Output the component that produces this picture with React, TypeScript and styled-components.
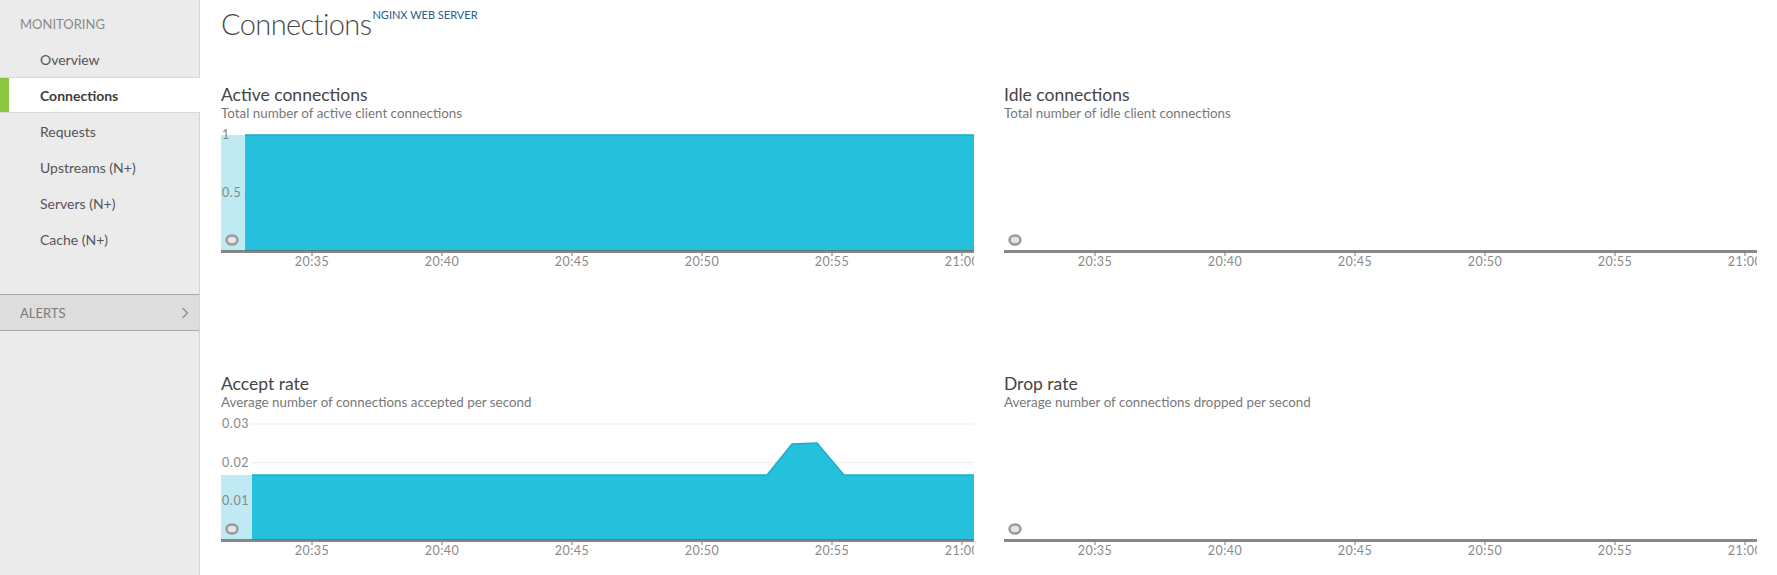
import React from "react";
import styled, { createGlobalStyle } from "styled-components";

const GlobalStyle = createGlobalStyle`
  html, body {
    margin: 0;
    padding: 0;
    background: #fff;
  }
  body {
    font-family: Lato, "Open Sans", "Liberation Sans", sans-serif;
    color: #555;
  }
`;

const Layout = styled.div`
  display: flex;
  min-height: 100vh;
`;

const Sidebar = styled.nav`
  width: 200px;
  flex-shrink: 0;
  background: #ebebeb;
  border-right: 1px solid #d4d4d4;
  box-sizing: border-box;
`;

const SectionLabel = styled.div`
  padding: 14px 0 7px 20px;
  line-height: 20px;
  font-size: 13px;
  color: #8a8a8a;
  text-transform: uppercase;
`;

const NavList = styled.ul`
  list-style: none;
  margin: 0 0 37px;
  padding: 0;
`;

const NavItem = styled.li<{ $active?: boolean }>`
  height: 36px;
  box-sizing: border-box;
  display: flex;
  align-items: center;
  padding-left: 40px;
  font-size: 14px;
  color: ${(p) => (p.$active ? "#3d3d3d" : "#555")};
  font-weight: ${(p) => (p.$active ? 700 : 400)};
  background: ${(p) => (p.$active ? "#fff" : "transparent")};
  border-top: 1px solid ${(p) => (p.$active ? "#d8d8d8" : "transparent")};
  border-bottom: 1px solid ${(p) => (p.$active ? "#d8d8d8" : "transparent")};
  box-shadow: ${(p) => (p.$active ? "inset 9px 0 0 #8cc63f" : "none")};
  margin-right: ${(p) => (p.$active ? "-1px" : "0")};
`;

const AlertsRow = styled.div`
  height: 37px;
  box-sizing: border-box;
  display: flex;
  align-items: center;
  justify-content: space-between;
  padding: 0 10px 0 20px;
  background: #dddddd;
  border-top: 1px solid #a9a9a9;
  border-bottom: 1px solid #a9a9a9;
  font-size: 13px;
  color: #7a7a7a;
`;

const Chevron = styled.svg`
  width: 8px;
  height: 12px;
`;

const Main = styled.main`
  flex: 1;
  padding: 0 20px 0 21px;
  min-width: 0;
`;

const Header = styled.header`
  height: 85px;
`;

const PageTitle = styled.h1`
  margin: 0;
  padding-top: 4px;
  font-size: 29px;
  line-height: 40px;
  font-weight: 300;
  color: #4a4a4a;
  letter-spacing: -0.6px;
`;

const Tag = styled.sup`
  font-size: 11px;
  line-height: 0;
  font-weight: 400;
  color: #2b5a87;
  letter-spacing: 0;
  vertical-align: 16px;
  margin-left: 1px;
`;

const ChartGrid = styled.div`
  display: grid;
  grid-template-columns: 1fr 1fr;
  column-gap: 30px;
  row-gap: 98px;
`;

const ChartCard = styled.section`
  min-width: 0;
`;

const ChartTitle = styled.h2`
  margin: 0;
  font-size: 17.5px;
  line-height: 20px;
  font-weight: 400;
  color: #454545;
`;

const ChartSubtitle = styled.p`
  margin: 0;
  font-size: 13.4px;
  line-height: 16px;
  color: #787878;
`;

const ChartSvg = styled.svg`
  display: block;
  width: 100%;
  height: 155px;
  overflow: hidden;
  font-family: Lato, "Open Sans", sans-serif;
`;

const W = 753;
const TOP = 14;
const AXIS = 130;
const PLOT_H = AXIS - TOP;
const TIMES = ["20:35", "20:40", "20:45", "20:50", "20:55", "21:00"];

type Point = [number, number];

interface ChartProps {
  max: number;
  yTicks?: { value: number; label: string }[];
  band?: number;
  data?: Point[];
}

const Chart = ({ max, yTicks = [], band = 0, data }: ChartProps) => {
  const y = (v: number) => AXIS - (v / max) * PLOT_H;
  const area = (pts: Point[]) =>
    `M${pts[0][0]},${AXIS} ` + pts.map(([x, v]) => `L${x},${y(v)}`).join(" ") + ` L${pts[pts.length - 1][0]},${AXIS} Z`;
  const line = (pts: Point[]) => pts.map(([x, v], i) => `${i ? "L" : "M"}${x},${y(v)}`).join(" ");

  const main = data ? data.filter(([x]) => x >= band) : [];
  const bandPts: Point[] = data ? [[0, data[0][1]], [band, data[0][1]]] : [];

  return (
    <ChartSvg viewBox={`0 0 ${W} 155`} preserveAspectRatio="none">
      {yTicks.map((t) => (
        <line key={t.label} x1={30} x2={W} y1={y(t.value)} y2={y(t.value)} stroke="#ececec" strokeWidth={1} />
      ))}
      {data && (
        <>
          <path d={area(bandPts)} fill="#bfe9f3" />
          <path d={area(main)} fill="#25c0dc" />
          <path d={line(main)} fill="none" stroke="#1faec9" strokeWidth={1.5} />
        </>
      )}
      {yTicks.map((t) => (
        <text key={t.label} x={1} y={y(t.value) + 4} fontSize={12.5} fill="#888" letterSpacing={0.6}>
          {t.label}
        </text>
      ))}
      <ellipse cx={11} cy={119} rx={5.5} ry={4.5} fill="#e4e4e4" stroke="#9a9a9a" strokeWidth={2.5} />
      <rect x={0} y={AXIS - 1} width={W} height={3} fill="rgba(105,105,105,0.8)" />
      {TIMES.map((t, i) => {
        const x = 91 + i * 130;
        return (
          <g key={t}>
            <line x1={x} x2={x} y1={AXIS + 2} y2={AXIS + 5} stroke="#777" strokeWidth={1} />
            <text x={x} y={145} textAnchor="middle" fontSize={12.5} fill="#8a8a8a" letterSpacing={0.5}>
              {t}
            </text>
          </g>
        );
      })}
    </ChartSvg>
  );
};

const acceptLevel = 0.0168;

const charts: { title: string; subtitle: string; chart: ChartProps }[] = [
  {
    title: "Active connections",
    subtitle: "Total number of active client connections",
    chart: {
      max: 1,
      band: 24,
      yTicks: [
        { value: 1, label: "1" },
        { value: 0.5, label: "0.5" },
      ],
      data: [
        [0, 1],
        [24, 1],
        [W, 1],
      ],
    },
  },
  {
    title: "Idle connections",
    subtitle: "Total number of idle client connections",
    chart: { max: 1 },
  },
  {
    title: "Accept rate",
    subtitle: "Average number of connections accepted per second",
    chart: {
      max: 0.03,
      band: 31,
      yTicks: [
        { value: 0.03, label: "0.03" },
        { value: 0.02, label: "0.02" },
        { value: 0.01, label: "0.01" },
      ],
      data: [
        [0, acceptLevel],
        [31, acceptLevel],
        [546, acceptLevel],
        [571, 0.0248],
        [596, 0.0251],
        [623, acceptLevel],
        [W, acceptLevel],
      ],
    },
  },
  {
    title: "Drop rate",
    subtitle: "Average number of connections dropped per second",
    chart: { max: 1 },
  },
];

const navItems = ["Overview", "Connections", "Requests", "Upstreams (N+)", "Servers (N+)", "Cache (N+)"];

export default function App() {
  return (
    <>
      <GlobalStyle />
      <Layout>
        <Sidebar>
          <SectionLabel>Monitoring</SectionLabel>
          <NavList>
            {navItems.map((item) => (
              <NavItem key={item} $active={item === "Connections"}>
                {item}
              </NavItem>
            ))}
          </NavList>
          <AlertsRow>
            ALERTS
            <Chevron viewBox="0 0 8 12">
              <path d="M1.5 1 L6.5 6 L1.5 11" fill="none" stroke="#888" strokeWidth={1.2} />
            </Chevron>
          </AlertsRow>
        </Sidebar>
        <Main>
          <Header>
            <PageTitle>
              Connections<Tag>NGINX WEB SERVER</Tag>
            </PageTitle>
          </Header>
          <ChartGrid>
            {charts.map((c) => (
              <ChartCard key={c.title}>
                <ChartTitle>{c.title}</ChartTitle>
                <ChartSubtitle>{c.subtitle}</ChartSubtitle>
                <Chart {...c.chart} />
              </ChartCard>
            ))}
          </ChartGrid>
        </Main>
      </Layout>
    </>
  );
}
